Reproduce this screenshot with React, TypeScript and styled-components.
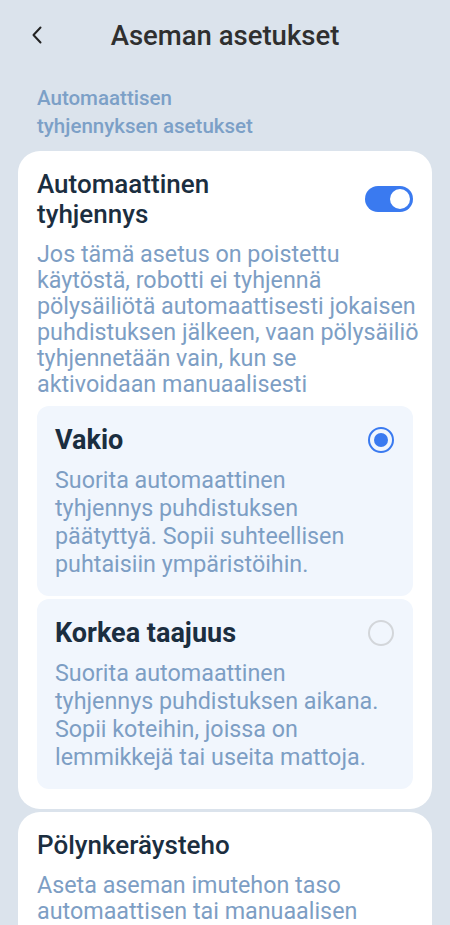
import React, { useState } from 'react'
import styled, { createGlobalStyle } from 'styled-components'

const GlobalStyle = createGlobalStyle`
  body {
    margin: 0;
    background: #dbe3ec;
    font-family: Roboto, "Noto Sans", "Liberation Sans", sans-serif;
    -webkit-font-smoothing: antialiased;
  }
`

const Page = styled.div`
  width: 450px;
  height: 925px;
  overflow: hidden;
  background: #dbe3ec;
`

const Header = styled.header`
  display: grid;
  grid-template-columns: 1fr auto 1fr;
  align-items: center;
  height: 70px;
`

const BackButton = styled.button`
  justify-self: start;
  display: flex;
  align-items: center;
  margin-left: 26px;
  padding: 4px;
  border: 0;
  background: none;
  color: #222;
`

const Title = styled.h1`
  margin: 0;
  font-size: 27.5px;
  font-weight: 500;
  color: #2f2f2f;
`

const SectionLabel = styled.div`
  padding: 14px 37px 11px;
  font-size: 20.5px;
  font-weight: 500;
  line-height: 28px;
  color: #7ca0c7;
`

const Card = styled.section`
  margin: 0 18px 3px;
  padding: 18px 19px 20px;
  background: #fff;
  border-radius: 22px;
`

const SettingRow = styled.div`
  display: flex;
  align-items: center;
  justify-content: space-between;
`

const SettingTitle = styled.div`
  font-size: 26px;
  font-weight: 500;
  line-height: 30px;
  color: #1b2e40;
`

// the copy keeps the line breaks of the design
const Description = styled.p<{ $lh?: number }>`
  margin: 12px 0 0;
  font-size: 23.3px;
  line-height: ${p => p.$lh ?? 26}px;
  white-space: pre;
  color: #7d9ec4;
`

const Toggle = styled.button<{ $on: boolean }>`
  flex: none;
  position: relative;
  width: 48px;
  height: 26px;
  padding: 0;
  border: 0;
  border-radius: 13px;
  background: ${p => (p.$on ? '#3a7af0' : '#c9d1db')};

  &::after {
    content: '';
    position: absolute;
    top: 3px;
    left: ${p => (p.$on ? '25px' : '3px')};
    width: 20px;
    height: 20px;
    border-radius: 50%;
    background: #fff;
  }
`

const Options = styled.div`
  display: flex;
  flex-direction: column;
  gap: 3px;
  margin-top: 9px;
`

const Option = styled.div`
  padding: 18px 18px 18px;
  background: #f1f6fd;
  border-radius: 12px;

  ${Description} {
    margin-top: 10px;
  }
`

const OptionTitle = styled.div`
  font-size: 27px;
  font-weight: 700;
  line-height: 32px;
  color: #1b2e40;
`

const Radio = styled.span<{ $checked: boolean }>`
  flex: none;
  box-sizing: border-box;
  width: 26px;
  height: 26px;
  margin-right: 1px;
  border-radius: 50%;
  border: 2px solid ${p => (p.$checked ? '#3a7af0' : '#d3d6da')};
  display: flex;
  align-items: center;
  justify-content: center;

  &::after {
    content: '';
    display: ${p => (p.$checked ? 'block' : 'none')};
    width: 14px;
    height: 14px;
    border-radius: 50%;
    background: #3a7af0;
  }
`

const options = [
  {
    id: 'standard',
    title: 'Vakio',
    text: 'Suorita automaattinen\ntyhjennys puhdistuksen\npäätyttyä. Sopii suhteellisen\npuhtaisiin ympäristöihin.',
  },
  {
    id: 'high',
    title: 'Korkea taajuus',
    text: 'Suorita automaattinen\ntyhjennys puhdistuksen aikana.\nSopii koteihin, joissa on\nlemmikkejä tai useita mattoja.',
  },
]

const autoEmptyText =
  'Jos tämä asetus on poistettu\nkäytöstä, robotti ei tyhjennä\npölysäiliötä automaattisesti jokaisen\npuhdistuksen jälkeen, vaan pölysäiliö\ntyhjennetään vain, kun se\naktivoidaan manuaalisesti'

const suctionText = 'Aseta aseman imutehon taso\nautomaattisen tai manuaalisen\ntyhjennyksen aikana.'

export default function App() {
  const [autoEmpty, setAutoEmpty] = useState(true)
  const [mode, setMode] = useState('standard')

  return (
    <Page>
      <GlobalStyle />
      <Header>
        <BackButton aria-label="Takaisin">
          <svg width="14" height="22" viewBox="0 0 14 22" fill="none">
            <path d="M10.5 3.5L3.5 11l7 7.5" stroke="currentColor" strokeWidth="2" strokeLinecap="round" strokeLinejoin="round" />
          </svg>
        </BackButton>
        <Title>Aseman asetukset</Title>
      </Header>

      <SectionLabel>
        Automaattisen
        <br />
        tyhjennyksen asetukset
      </SectionLabel>

      <Card>
        <SettingRow>
          <SettingTitle>
            Automaattinen
            <br />
            tyhjennys
          </SettingTitle>
          <Toggle $on={autoEmpty} onClick={() => setAutoEmpty(!autoEmpty)} aria-label="Automaattinen tyhjennys" />
        </SettingRow>
        <Description>{autoEmptyText}</Description>
        <Options>
          {options.map(o => (
            <Option key={o.id} onClick={() => setMode(o.id)}>
              <SettingRow>
                <OptionTitle>{o.title}</OptionTitle>
                <Radio $checked={mode === o.id} />
              </SettingRow>
              <Description $lh={28}>{o.text}</Description>
            </Option>
          ))}
        </Options>
      </Card>

      <Card>
        <SettingTitle>Pölynkeräysteho</SettingTitle>
        <Description>{suctionText}</Description>
      </Card>
    </Page>
  )
}
